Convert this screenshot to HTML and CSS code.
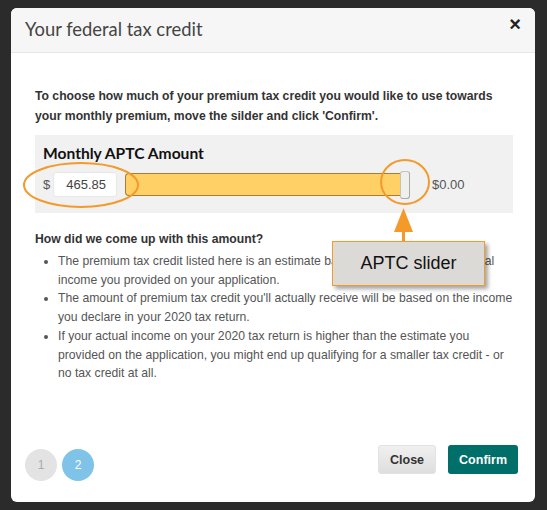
FILE: index.html
```html
<!DOCTYPE html>
<html>
<head>
    <meta charset="UTF-8">
    <title>Your federal tax credit</title>
    <link rel="stylesheet" href="styles.css">
</head>
<body>
    <div class="modal">
        <div class="modal-header">
            <h2 class="modal-title">Your federal tax credit</h2>
            <span class="close">&times;</span>
        </div>
        <div class="modal-body">
            <p class="intro">To choose how much of your premium tax credit you would like to use towards your monthly premium, move the silder and click 'Confirm'.</p>
            <div class="aptc-box">
                <h3>Monthly APTC Amount</h3>
                <div class="aptc-row">
                    <span class="dollar">$</span>
                    <input class="amount" type="text" value="465.85">
                    <div class="track">
                        <div class="fill"></div>
                        <div class="handle"></div>
                    </div>
                    <span class="max">$0.00</span>
                </div>
            </div>
            <h4 class="how">How did we come up with this amount?</h4>
            <ul class="reasons">
                <li>The premium tax credit listed here is an estimate based on the household annual income you provided on your application.</li>
                <li>The amount of premium tax credit you'll actually receive will be based on the income you declare in your 2020 tax return.</li>
                <li>If your actual income on your 2020 tax return is higher than the estimate you provided on the application, you might end up qualifying for a smaller tax credit - or no tax credit at all.</li>
            </ul>
        </div>
        <div class="modal-footer">
            <div class="steps">
                <span class="step">1</span>
                <span class="step on">2</span>
            </div>
            <div class="actions">
                <a href="javascript:;" class="btn btn-close">Close</a>
                <a href="javascript:;" class="btn btn-confirm">Confirm</a>
            </div>
        </div>

        <!-- annotation layer -->
        <svg class="marks" width="547" height="510" viewBox="0 0 547 510">
            <ellipse cx="81" cy="185" rx="57" ry="22" fill="none" stroke="#f39a2b" stroke-width="2"/>
            <ellipse cx="405" cy="182" rx="24" ry="22" fill="none" stroke="#f39a2b" stroke-width="2"/>
            <line x1="403.5" y1="242" x2="403.5" y2="228" stroke="#f39a2b" stroke-width="3"/>
            <polygon points="403.5,208 394,232 413,232" fill="#f39a2b"/>
        </svg>
        <div class="callout">APTC slider</div>
    </div>
</body>
</html>
```

FILE: styles.css
```css
* {
    margin: 0;
    padding: 0;
    box-sizing: border-box;
}
a {
    text-decoration: none;
}
body {
    background: #2b2b2b;
    padding: 8px 12px 8px 11px;
    font-family: "Liberation Sans", Arial, sans-serif;
}
.modal {
    position: relative;
    width: 524px;
    height: 494px;
    background: #fff;
    border-radius: 6px;
    display: flex;
    flex-direction: column;
}
.modal-header {
    height: 45px;
    background: #f6f6f6;
    border-bottom: 1px solid #e6e6e6;
    border-radius: 6px 6px 0 0;
    display: flex;
    align-items: center;
    justify-content: space-between;
    padding: 0 14px 2px 14px;
}
.modal-title {
    font-family: Lato, sans-serif;
    font-weight: normal;
    font-size: 18.4px;
    color: #444;
}
.close {
    font-size: 20px;
    font-weight: bold;
    color: #222;
    margin-top: -10px;
}
.modal-body {
    flex: 1;
    padding: 33px 22px 0 24px;
}
.intro {
    font-size: 12.2px;
    font-weight: bold;
    color: #333;
    line-height: 20px;
}
.aptc-box {
    margin-top: 9px;
    width: 478px;
    height: 78px;
    background: #f1f1f1;
    padding: 8px 8px 0 8px;
}
.aptc-box h3 {
    font-family: Lato, sans-serif;
    font-size: 15.6px;
    font-weight: bold;
    color: #111;
    line-height: 20px;
}
.aptc-row {
    display: flex;
    align-items: center;
    margin-top: 9px;
}
.dollar {
    font-size: 13px;
    color: #555;
    width: 10px;
}
.amount {
    width: 64px;
    height: 25px;
    border: 1px solid #e8e8e8;
    border-radius: 3px;
    background: #fff;
    font-family: "Liberation Sans", Arial, sans-serif;
    font-size: 13px;
    color: #444;
    text-align: right;
    padding-right: 10px;
}
.track {
    position: relative;
    margin-left: 8px;
    width: 285px;
    height: 23px;
}
.fill {
    height: 23px;
    width: 275px;
    background: #ffd066;
    border: 1px solid #a57e36;
    border-right: none;
    border-radius: 4px 0 0 4px;
}
.handle {
    position: absolute;
    left: 275px;
    top: -2px;
    width: 10px;
    height: 28px;
    background: #efefeb;
    border: 1px solid #c2c2c2;
    border-right-color: #a9a9a9;
    border-bottom-color: #a9a9a9;
    border-radius: 3px;
}
.max {
    margin-left: 22px;
    font-size: 13px;
    color: #555;
}
.how {
    margin-top: 19px;
    font-size: 12.2px;
    font-weight: bold;
    color: #333;
}
.reasons {
    margin-top: 6px;
    padding-left: 23px;
    font-size: 12.2px;
    color: #555;
    line-height: 18.7px;
}
.modal-footer {
    height: 86px;
    display: flex;
    align-items: center;
    justify-content: space-between;
    padding: 0 17px 0 14px;
}
.steps {
    display: flex;
    gap: 5px;
    margin-top: 12px;
}
.step {
    width: 32px;
    height: 32px;
    border-radius: 50%;
    background: #e3e3e3;
    color: #aaa;
    font-size: 12px;
    display: flex;
    align-items: center;
    justify-content: center;
}
.step.on {
    background: #7fc4e8;
    color: #fff;
}
.actions {
    display: flex;
    gap: 12px;
    margin-top: 1px;
}
.btn {
    height: 29px;
    padding: 0 11px;
    border-radius: 3px;
    font-size: 12.5px;
    font-weight: bold;
    display: flex;
    align-items: center;
}
.btn-close {
    background: linear-gradient(#f0f0f0, #dedede);
    border: 1px solid #e2e2e2;
    color: #333;
}
.btn-confirm {
    background: #006e69;
    color: #fff;
}
.marks {
    position: absolute;
    left: -11px;
    top: -8px;
    pointer-events: none;
}
.callout {
    position: absolute;
    left: 321px;
    top: 233px;
    width: 153px;
    height: 45px;
    background: #dcdad6;
    border: 1px solid #f39a2b;
    box-shadow: 3px 3px 4px rgba(0, 0, 0, 0.35);
    font-size: 18px;
    color: #111;
    display: flex;
    align-items: center;
    justify-content: center;
}
```
